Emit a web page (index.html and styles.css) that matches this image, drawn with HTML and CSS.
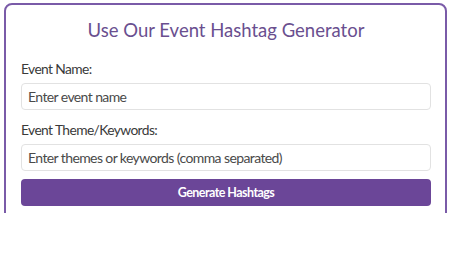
FILE: index.html
```html
<!DOCTYPE html>
<html lang="en">
<head>
<meta charset="utf-8">
<title>Event Hashtag Generator</title>
<link rel="stylesheet" href="styles.css">
</head>
<body>
<div class="viewport">
  <section class="card">
    <h2 class="title">Use Our Event Hashtag Generator</h2>
    <form class="form">
      <label class="label" for="event-name">Event Name:</label>
      <input class="input" id="event-name" type="text" placeholder="Enter event name">
      <label class="label" for="event-theme">Event Theme/Keywords:</label>
      <input class="input" id="event-theme" type="text" placeholder="Enter themes or keywords (comma separated)">
      <button class="button" type="button">Generate Hashtags</button>
    </form>
  </section>
</div>
</body>
</html>
```
FILE: styles.css
```css
html, body {
  margin: 0;
  padding: 0;
  background: #ffffff;
}

body {
  font-family: "Lato", "Open Sans", sans-serif;
  color: #333333;
}

.viewport {
  height: 213px;
  overflow: hidden;
}

.card {
  box-sizing: border-box;
  width: 443px;
  margin: 3px 0 0 4px;
  padding: 14px 14px 20px 15px;
  border: 2px solid #7a5ba8;
  border-radius: 8px;
  background: #ffffff;
}

.title {
  margin: 0 0 18px;
  font-size: 18.5px;
  line-height: 22px;
  font-weight: 400;
  text-align: center;
  color: #6a4f8f;
}

.form {
  display: flex;
  flex-direction: column;
}

.label {
  display: block;
  margin: 0 0 4px;
  font-size: 13.8px;
  line-height: 20px;
  letter-spacing: -0.6px;
  color: #3a3a3a;
}

.input {
  box-sizing: border-box;
  width: 100%;
  height: 27px;
  margin: 0 0 10px;
  padding: 0 6px;
  border: 1px solid #e2e2e2;
  border-radius: 4px;
  font-family: inherit;
  font-size: 14px;
  letter-spacing: -0.6px;
  color: #333333;
  background: #ffffff;
}

.input::placeholder {
  color: #4a4a4a;
  opacity: 1;
}

.button {
  box-sizing: border-box;
  width: 100%;
  height: 27px;
  margin-top: -2px;
  padding: 0;
  border: none;
  border-radius: 4px;
  background: #6b4698;
  color: #ffffff;
  font-family: inherit;
  font-size: 12.5px;
  font-weight: 700;
  letter-spacing: -0.55px;
  cursor: pointer;
}
```
